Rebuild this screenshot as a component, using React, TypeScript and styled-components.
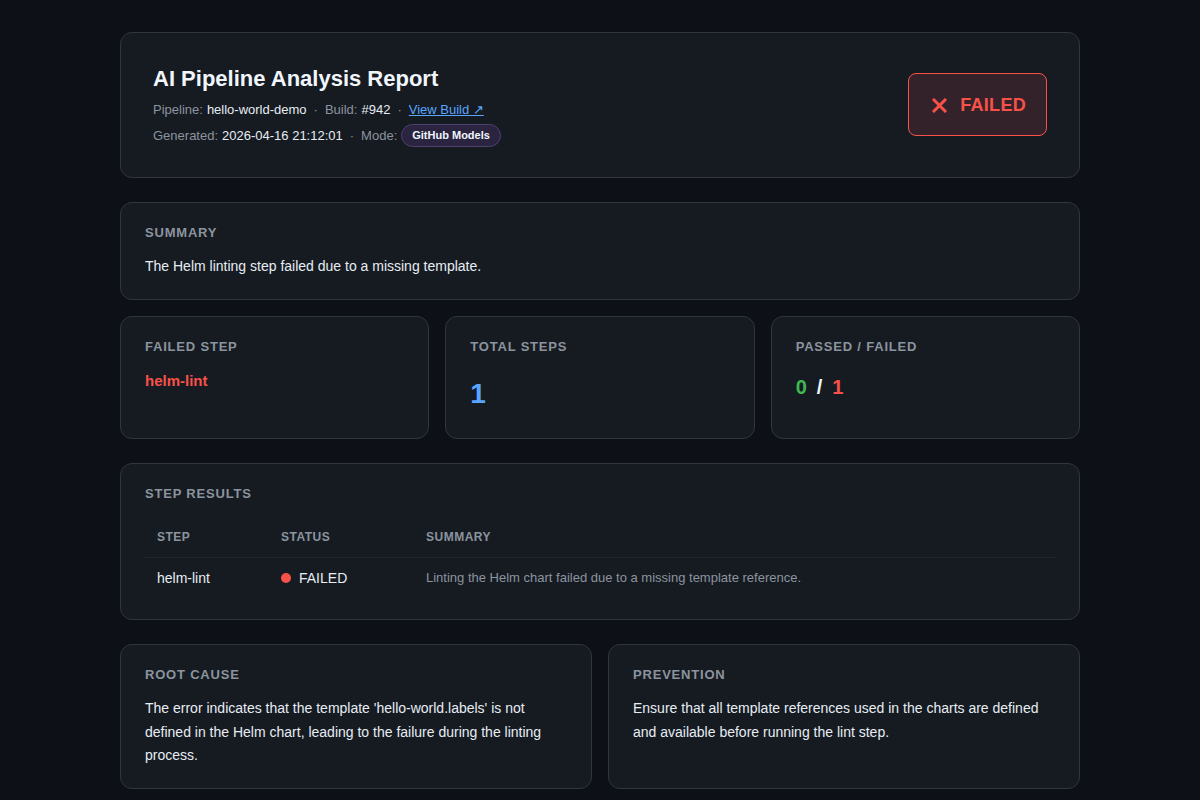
import React from "react";
import styled, { createGlobalStyle } from "styled-components";

const Global = createGlobalStyle`
  html, body { margin: 0; padding: 0; background: #0d1117; }
  body { font-family: "Liberation Sans", Arial, sans-serif; color: #e6edf3; }
  * { box-sizing: border-box; }
`;

const Page = styled.main`
  max-width: 960px;
  margin: 0 auto;
  padding: 32px 0 32px;
  display: flex;
  flex-direction: column;
`;

const Card = styled.section<{ $mb?: number }>`
  background: #161b22;
  border: 1px solid #30363d;
  border-radius: 12px;
  padding: 22px 24px 20px;
  margin-bottom: ${(p) => (p.$mb ?? 24)}px;
`;

const HeaderCard = styled(Card)`
  padding: 32px 32px 30px;
  display: flex;
  align-items: center;
  justify-content: space-between;
`;

const Title = styled.h1`
  margin: 0 0 8px;
  font-size: 22px;
  line-height: 28px;
  font-weight: 700;
  color: #f0f6fc;
`;

const MetaLine = styled.div<{ $mt?: number }>`
  display: flex;
  align-items: center;
  font-size: 13px;
  line-height: 17px;
  color: #8b949e;
  margin-top: ${(p) => p.$mt ?? 0}px;
`;

const MetaValue = styled.span`
  color: #e6edf3;
  margin-left: 4px;
`;

const Sep = styled.span`
  margin: 0 7px;
  color: #8b949e;
`;

const Link = styled.a`
  color: #58a6ff;
  text-decoration: underline;
`;

const Pill = styled.span`
  display: inline-flex;
  align-items: center;
  height: 23px;
  padding: 0 10px;
  margin-left: 4px;
  border-radius: 12px;
  background: #2a2440;
  border: 1px solid #4d4170;
  color: #f0f6fc;
  font-size: 11px;
  font-weight: 700;
`;

const StatusBadge = styled.div`
  display: flex;
  align-items: center;
  gap: 13px;
  padding: 20px 20px 19px 23px;
  margin-bottom: 3px;
  border: 1px solid #f85149;
  border-radius: 8px;
  background: #33222a;
  color: #f85149;
  font-size: 18px;
  line-height: 22px;
  font-weight: 700;
  letter-spacing: 0.3px;
`;

const Label = styled.h2`
  margin: 0 0 14px;
  font-size: 13px;
  line-height: 16px;
  font-weight: 700;
  letter-spacing: 0.8px;
  text-transform: uppercase;
  color: #8b949e;
`;

const Body = styled.p`
  margin: 0;
  font-size: 14px;
  line-height: 1.7;
  color: #e6edf3;
`;

const Grid = styled.div<{ $cols: number; $mb: number }>`
  display: grid;
  grid-template-columns: repeat(${(p) => p.$cols}, 1fr);
  gap: 16px;
  margin-bottom: ${(p) => p.$mb}px;
  & > section { margin-bottom: 0; }
`;

const StatValue = styled.div<{ $size: number; $lh: number; $color: string }>`
  font-size: ${(p) => p.$size}px;
  line-height: ${(p) => p.$lh}px;
  font-weight: 700;
  color: ${(p) => p.$color};
`;

const Slash = styled.span`
  color: #f0f6fc;
  margin: 0 10px;
`;

const Table = styled.table`
  width: 100%;
  border-collapse: collapse;
`;

const Th = styled.th<{ $w?: number }>`
  text-align: left;
  padding: 12px 12px 11px;
  font-size: 12px;
  line-height: 18px;
  font-weight: 700;
  letter-spacing: 0.5px;
  text-transform: uppercase;
  color: #8b949e;
  border-bottom: 1px solid #21262d;
  width: ${(p) => (p.$w ? `${p.$w}px` : "auto")};
`;

const Td = styled.td<{ $muted?: boolean }>`
  padding: 10px 12px 11px;
  font-size: ${(p) => (p.$muted ? 13 : 14)}px;
  line-height: 20px;
  color: ${(p) => (p.$muted ? "#8b949e" : "#e6edf3")};
`;

const StatusCell = styled.span`
  display: inline-flex;
  align-items: center;
  gap: 8px;
`;

const Dot = styled.span`
  width: 10px;
  height: 10px;
  border-radius: 50%;
  background: #f85149;
`;

const XIcon = () => (
  <svg width="15" height="15" viewBox="0 0 15 15" aria-hidden="true">
    <path d="M2 2 L13 13 M13 2 L2 13" stroke="#f85149" strokeWidth="3" strokeLinecap="square" />
  </svg>
);

export default function App() {
  return (
    <>
      <Global />
      <Page>
        <HeaderCard>
          <div>
            <Title>AI Pipeline Analysis Report</Title>
            <MetaLine>
              Pipeline:<MetaValue>hello-world-demo</MetaValue>
              <Sep>·</Sep>
              Build:<MetaValue>#942</MetaValue>
              <Sep>·</Sep>
              <Link href="#">View Build ↗</Link>
            </MetaLine>
            <MetaLine $mt={6}>
              Generated:<MetaValue>2026-04-16 21:12:01</MetaValue>
              <Sep>·</Sep>
              Mode:<Pill>GitHub Models</Pill>
            </MetaLine>
          </div>
          <StatusBadge>
            <XIcon />
            FAILED
          </StatusBadge>
        </HeaderCard>

        <Card $mb={16}>
          <Label>Summary</Label>
          <Body>The Helm linting step failed due to a missing template.</Body>
        </Card>

        <Grid $cols={3} $mb={24}>
          <Card>
            <Label>Failed Step</Label>
            <StatValue $size={15} $lh={24} $color="#f85149">helm-lint</StatValue>
          </Card>
          <Card>
            <Label>Total Steps</Label>
            <StatValue $size={28} $lh={49} $color="#58a6ff">1</StatValue>
          </Card>
          <Card>
            <Label>Passed / Failed</Label>
            <StatValue $size={20} $lh={36} $color="#3fb950">
              0<Slash>/</Slash><span style={{ color: "#f85149" }}>1</span>
            </StatValue>
          </Card>
        </Grid>

        <Card>
          <Label>Step Results</Label>
          <Table>
            <thead>
              <tr>
                <Th $w={124}>Step</Th>
                <Th $w={145}>Status</Th>
                <Th>Summary</Th>
              </tr>
            </thead>
            <tbody>
              <tr>
                <Td>helm-lint</Td>
                <Td>
                  <StatusCell>
                    <Dot />
                    FAILED
                  </StatusCell>
                </Td>
                <Td $muted>Linting the Helm chart failed due to a missing template reference.</Td>
              </tr>
            </tbody>
          </Table>
        </Card>

        <Grid $cols={2} $mb={0}>
          <Card>
            <Label>Root Cause</Label>
            <Body>
              The error indicates that the template 'hello-world.labels' is not defined in the Helm chart, leading to the failure during the linting process.
            </Body>
          </Card>
          <Card>
            <Label>Prevention</Label>
            <Body>Ensure that all template references used in the charts are defined and available before running the lint step.</Body>
          </Card>
        </Grid>
      </Page>
    </>
  );
}
